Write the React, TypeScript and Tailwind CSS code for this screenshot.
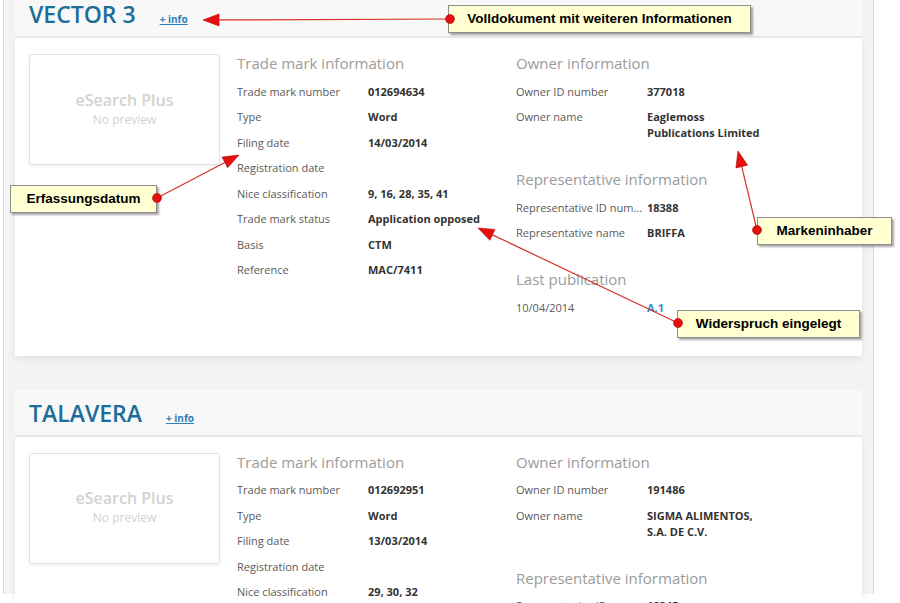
import React from 'react';

type Row = { label: string; value: React.ReactNode; link?: boolean };
type Section = { title: string; rows: Row[] };

interface Mark {
  name: string;
  tm: Row[];
  right: Section[];
}

const marks: Mark[] = [
  {
    name: 'VECTOR 3',
    tm: [
      { label: 'Trade mark number', value: '012694634' },
      { label: 'Type', value: 'Word' },
      { label: 'Filing date', value: '14/03/2014' },
      { label: 'Registration date', value: '' },
      { label: 'Nice classification', value: '9, 16, 28, 35, 41' },
      { label: 'Trade mark status', value: 'Application opposed' },
      { label: 'Basis', value: 'CTM' },
      { label: 'Reference', value: 'MAC/7411' },
    ],
    right: [
      {
        title: 'Owner information',
        rows: [
          { label: 'Owner ID number', value: '377018' },
          { label: 'Owner name', value: 'Eaglemoss Publications Limited' },
        ],
      },
      {
        title: 'Representative information',
        rows: [
          { label: 'Representative ID number', value: '18388' },
          { label: 'Representative name', value: 'BRIFFA' },
        ],
      },
      {
        title: 'Last publication',
        rows: [{ label: '10/04/2014', value: 'A.1', link: true }],
      },
    ],
  },
  {
    name: 'TALAVERA',
    tm: [
      { label: 'Trade mark number', value: '012692951' },
      { label: 'Type', value: 'Word' },
      { label: 'Filing date', value: '13/03/2014' },
      { label: 'Registration date', value: '' },
      { label: 'Nice classification', value: '29, 30, 32' },
      { label: 'Trade mark status', value: 'Application filed' },
      { label: 'Basis', value: 'CTM' },
      { label: 'Reference', value: '' },
    ],
    right: [
      {
        title: 'Owner information',
        rows: [
          { label: 'Owner ID number', value: '191486' },
          { label: 'Owner name', value: 'SIGMA ALIMENTOS, S.A. DE C.V.' },
        ],
      },
      {
        title: 'Representative information',
        rows: [
          { label: 'Representative ID number', value: '12345' },
          { label: 'Representative name', value: 'ELZABURU' },
        ],
      },
    ],
  },
];

const DataRow: React.FC<{ row: Row }> = ({ row }) => (
  <div className="flex py-[4.75px] text-[11px] leading-[16px]">
    <div className="w-[131px] shrink-0 truncate pr-[4px] text-[#5a5a5a]">{row.label}</div>
    <div className={`w-[120px] font-bold ${row.link ? 'text-[#3a8ccb]' : 'text-[#333]'}`}>{row.value}</div>
  </div>
);

const Heading: React.FC<{ children: React.ReactNode }> = ({ children }) => (
  <h3 className="mb-[7px] text-[15px] leading-[18px] text-[#9b9b9b]">{children}</h3>
);

const MarkCard: React.FC<{ mark: Mark; first?: boolean }> = ({ mark, first }) => (
  <div className={first ? 'mt-[-9px]' : 'mt-[34px]'}>
    <div className="flex h-[47px] items-baseline gap-[24px] border-b-2 border-[#e9e9e9] bg-[#f8f8f8] px-[14px] pt-[8px]">
      <h2 className="text-[23px] font-semibold leading-[30px] text-[#1c6d99]">{mark.name}</h2>
      <a className="text-[10px] font-bold text-[#2f80b8] underline">+ info</a>
    </div>
    <div className="flex bg-white px-[14px] pt-[16px] pb-[35px] shadow-[0_3px_6px_rgba(0,0,0,0.07)]">
      <div className="flex h-[111px] w-[191px] shrink-0 flex-col items-center justify-center rounded-[3px] border border-[#e2e2e2] shadow-[0_1px_3px_rgba(0,0,0,0.08)]">
        <div className="text-[16px] font-semibold leading-[20px] text-[#d2d2d2]">eSearch Plus</div>
        <div className="text-[12px] leading-[20px] text-[#d2d2d2]">No preview</div>
      </div>
      <div className="ml-[17px] w-[279px] shrink-0">
        <Heading>Trade mark information</Heading>
        {mark.tm.map((r) => (
          <DataRow key={r.label} row={r} />
        ))}
      </div>
      <div className="flex-1">
        {mark.right.map((s, i) => (
          <div key={s.title} className={i > 0 ? 'mt-[24px]' : ''}>
            <Heading>{s.title}</Heading>
            {s.rows.map((r) => (
              <DataRow key={r.label} row={r} />
            ))}
          </div>
        ))}
      </div>
    </div>
  </div>
);

// annotation callouts drawn over the screenshot
const notes = [
  { text: 'Volldokument mit weiteren Informationen', cls: 'left-[448px] top-[5px] w-[303px]' },
  { text: 'Erfassungsdatum', cls: 'left-[10px] top-[185px] w-[147px]' },
  { text: 'Markeninhaber', cls: 'left-[757px] top-[217px] w-[135px]' },
  { text: 'Widerspruch eingelegt', cls: 'left-[677px] top-[310px] w-[183px]' },
];

const arrows = [
  [450, 19, 203, 20],
  [157, 198, 239, 155],
  [757, 230, 738, 151],
  [678, 323, 478, 228],
];

const Arrow: React.FC<{ a: number[] }> = ({ a }) => {
  const [x1, y1, x2, y2] = a;
  const dx = x2 - x1;
  const dy = y2 - y1;
  const len = Math.hypot(dx, dy);
  const ux = dx / len;
  const uy = dy / len;
  const hl = 16;
  const hw = 6;
  const bx = x2 - ux * hl;
  const by = y2 - uy * hl;
  const pts = `${x2},${y2} ${bx - uy * hw},${by + ux * hw} ${bx + uy * hw},${by - ux * hw}`;
  return (
    <g>
      <line x1={x1} y1={y1} x2={bx} y2={by} stroke="#d9302c" strokeWidth="1.2" />
      <polygon points={pts} fill="#e3100f" stroke="#b00" strokeWidth="0.6" />
      <circle cx={x1} cy={y1} r="4.5" fill="#e3100f" stroke="#a00" strokeWidth="0.6" />
    </g>
  );
};

export default function App() {
  return (
    <div className="relative h-[603px] w-full overflow-hidden bg-white font-['Open_Sans',sans-serif]">
      <div className="ml-[3px] h-full w-[871px] border-x border-[#dcdcdc] bg-[#f3f3f3] px-[11px]">
        {marks.map((m, i) => (
          <MarkCard key={m.name} mark={m} first={i === 0} />
        ))}
      </div>

      {notes.map((n) => (
        <div
          key={n.text}
          className={`absolute ${n.cls} flex h-[28px] items-center justify-center border border-[#8d8d8d] bg-[#ffffd2] font-['Liberation_Sans',Arial,sans-serif] text-[13.5px] font-bold text-black shadow-[2px_2px_2px_rgba(0,0,0,0.35)]`}
        >
          {n.text}
        </div>
      ))}

      <svg className="pointer-events-none absolute left-0 top-0" width="900" height="603">
        {arrows.map((a, i) => (
          <Arrow key={i} a={a} />
        ))}
      </svg>
    </div>
  );
}
